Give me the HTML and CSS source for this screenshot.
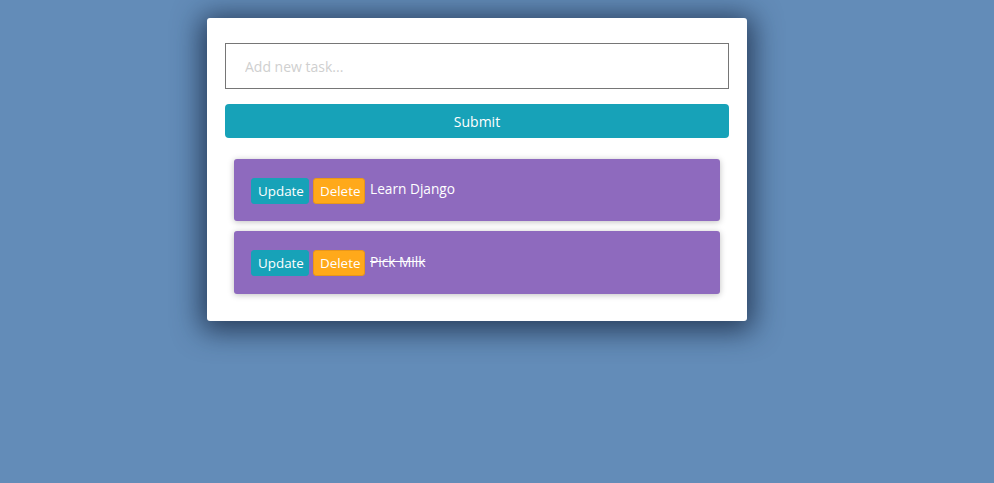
FILE: index.html
```html
<!DOCTYPE html>
<html>
<head>
<meta charset="utf-8">
<link rel="stylesheet" href="styles.css">
</head>
<body>
<div class="card">
  <form class="task-form">
    <input class="task-input" type="text" placeholder="Add new task...">
    <button class="submit" type="button">Submit</button>
  </form>
  <div class="list">
    <div class="item">
      <button class="btn btn-update">Update</button>
      <button class="btn btn-delete">Delete</button>
      <span class="title">Learn Django</span>
    </div>
    <div class="item">
      <button class="btn btn-update">Update</button>
      <button class="btn btn-delete">Delete</button>
      <span class="title done">Pick Milk</span>
    </div>
  </div>
</div>
</body>
</html>
```
FILE: styles.css
```css
* { box-sizing: border-box; }
body {
  margin: 0;
  background: #638cb8;
  font-family: "Open Sans", "Noto Sans", sans-serif;
  height: 483px;
}
.card {
  width: 540px;
  margin: 18px 0 0 207px;
  background: #fff;
  border-radius: 3px;
  padding: 25px 18px 27px;
  box-shadow: 0 4px 28px 6px rgba(20, 35, 60, 0.75);
}
.task-form {
  display: flex;
  flex-direction: column;
  gap: 15px;
}
.task-input {
  height: 46px;
  border: 1px solid #767676;
  padding: 0 19px;
  font: 14px "Open Sans", sans-serif;
  outline: none;
}
.task-input::placeholder { color: #cfcfcf; }
.submit {
  height: 34px;
  border: none;
  border-radius: 4px;
  background: #17a2b8;
  color: #fff;
  font: 14px "Open Sans", sans-serif;
}
.list {
  display: flex;
  flex-direction: column;
  gap: 10px;
  margin: 21px 9px 0;
}
.item {
  height: 62px;
  background: #8e6abe;
  border-radius: 3px;
  box-shadow: 0 1px 6px rgba(0,0,0,0.25);
  display: flex;
  align-items: center;
  padding: 0 17px;
  gap: 4px;
  padding-top: 1px;
}
.item + .item { height: 63px; padding-top: 1px; }
.btn {
  height: 26px;
  border-radius: 3px;
  font: 13.4px "Open Sans", sans-serif;
  color: #fff;
  padding: 0 6px;
}
.btn-update {
  width: 58px;
  background: #17a2b8;
  border: 1px solid #17a2b8;
}
.btn-delete {
  width: 52px;
  background: #ffa91a;
  border: 1px solid #e8961a;
}
.title {
  color: #fff;
  font-size: 13.7px;
  margin-left: 1px;
  margin-top: -4px;
}
.done { text-decoration: line-through; }
```
